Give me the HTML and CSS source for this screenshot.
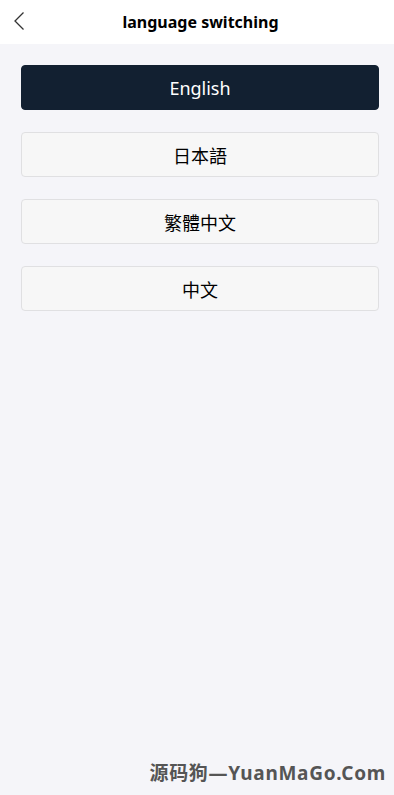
FILE: index.html
```html
<!DOCTYPE html>
<html>
<head>
<meta charset="utf-8">
<link rel="stylesheet" href="styles.css">
</head>
<body>
<div class="page">
  <header class="nav">
    <svg class="back" width="12" height="20" viewBox="0 0 12 20"><path d="M10.5 1.5 L2 10 L10.5 18.5" fill="none" stroke="#333" stroke-width="1.3"/></svg>
    <div class="title">language switching</div>
  </header>
  <main class="list">
    <div class="item active">English</div>
    <div class="item">日本語</div>
    <div class="item">繁體中文</div>
    <div class="item">中文</div>
  </main>
  <div class="mark">源码狗—YuanMaGo.Com</div>
</div>
</body>
</html>
```
FILE: styles.css
```css
html, body { margin: 0; padding: 0; }
body {
  background: #f5f5f9;
  font-family: "Noto Sans", "Noto Sans CJK SC", sans-serif;
  color: #000;
}
.page { width: 394px; height: 795px; display: flex; flex-direction: column; position: relative; }
.nav {
  height: 44px;
  background: #fff;
  display: flex;
  align-items: center;
  justify-content: center;
  padding-left: 7px;
  position: relative;
}
.back { position: absolute; left: 13px; top: 11px; }
.title { font-size: 16px; font-weight: 700; color: #000; margin-top: -1px; }
.list { padding: 21px 15px 0 21px; display: flex; flex-direction: column; gap: 22px; }
.item {
  height: 45px;
  box-sizing: border-box;
  border: 1px solid #e0e0e2;
  border-radius: 4px;
  background: #f7f7f7;
  display: flex;
  align-items: center;
  justify-content: center;
  font-size: 18px;
  color: #000;
}
.item.active { background: #122031; border-color: #122031; color: #fff; }
.mark {
  position: absolute;
  right: 8px;
  bottom: 9px;
  font-size: 19px;
  font-weight: 700;
  color: #555;
  letter-spacing: 0.7px;
}
```
